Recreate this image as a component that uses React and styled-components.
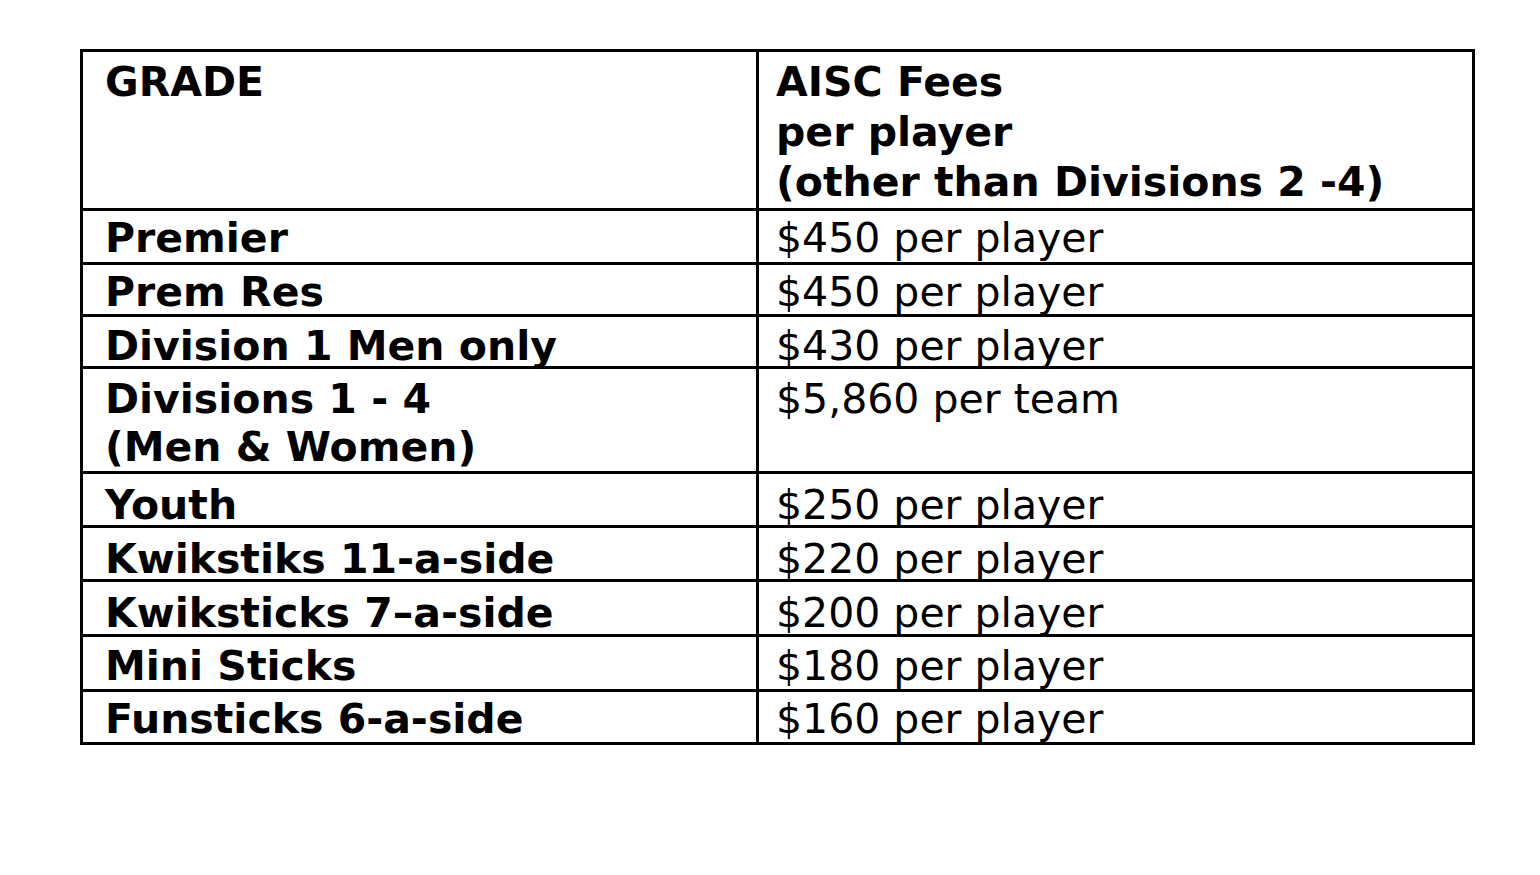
import React from 'react';
import styled, { createGlobalStyle } from 'styled-components';

const GlobalStyle = createGlobalStyle`
  html, body {
    margin: 0;
    padding: 0;
    background: #ffffff;
  }
  body {
    font-family: "DejaVu Sans", Verdana, sans-serif;
    color: #000;
  }
`;

const Page = styled.div`
  width: 1540px;
  height: 875px;
  padding: 49px 0 0 80px;
  box-sizing: border-box;
  overflow: hidden;
`;

const FeeTable = styled.table`
  width: 1395px;
  border-collapse: collapse;
  table-layout: fixed;
  font-size: 41px;
`;

// grade column is bold, fee column regular; row spacing of the scan is a bit uneven
const Cell = styled.td`
  border: 3px solid #000;
  vertical-align: top;
  padding: ${({ $pt }) => $pt}px 8px 0 ${({ $first }) => ($first ? '22px' : '17px')};
  line-height: ${({ $lh }) => $lh}px;
  font-weight: ${({ $bold }) => ($bold ? 700 : 400)};
  white-space: nowrap;
  height: ${({ $h }) => ($h ? `${$h}px` : 'auto')};
  box-sizing: border-box;
`;

const rows = [
  { grade: 'Premier', fee: '$450 per player', pt: 4, lh: 47 },
  { grade: 'Prem Res', fee: '$450 per player', pt: 6, lh: 43 },
  { grade: 'Division 1 Men only', fee: '$430 per player', pt: 9, lh: 40 },
  { grade: ['Divisions 1 - 4', '(Men & Women)'], fee: '$5,860 per team', pt: 7, lh: 47.5 },
  { grade: 'Youth', fee: '$250 per player', pt: 11, lh: 40 },
  { grade: 'Kwikstiks 11-a-side', fee: '$220 per player', pt: 11, lh: 40 },
  { grade: 'Kwiksticks 7\u2013a-side', fee: '$200 per player', pt: 10, lh: 42 },
  { grade: 'Mini Sticks', fee: '$180 per player', pt: 7, lh: 45 },
  { grade: 'Funsticks 6-a-side', fee: '$160 per player', pt: 5, lh: 45 },
];

const App = () => {
  return (
    <>
      <GlobalStyle />
      <Page>
        <FeeTable>
          <colgroup>
            <col style={{ width: '676px' }} />
            <col />
          </colgroup>
          <tbody>
            <tr>
              <Cell $first $bold $pt={5} $lh={50} $h={159}>GRADE</Cell>
              <Cell $bold $pt={5} $lh={50} $h={159}>
                AISC Fees
                <br />
                per player
                <br />
                (other than Divisions 2 -4)
              </Cell>
            </tr>
            {rows.map((r, i) => (
              <tr key={i}>
                <Cell $first $bold $pt={r.pt} $lh={r.lh}>
                  {Array.isArray(r.grade)
                    ? r.grade.map((line, j) => (
                        <React.Fragment key={j}>
                          {j > 0 && <br />}
                          {line}
                        </React.Fragment>
                      ))
                    : r.grade}
                </Cell>
                <Cell $pt={r.pt} $lh={r.lh}>{r.fee}</Cell>
              </tr>
            ))}
          </tbody>
        </FeeTable>
      </Page>
    </>
  );
};

export default App;
